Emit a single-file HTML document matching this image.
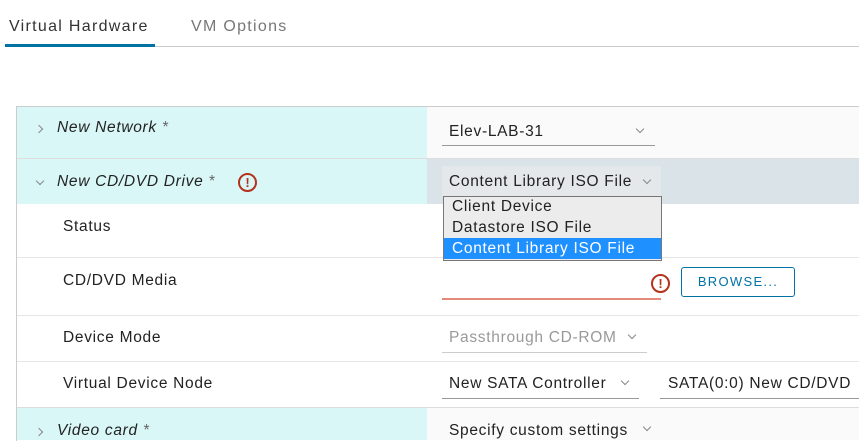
<!DOCTYPE html>
<html><head><style>
body{margin:0;width:859px;height:440px;background:#fff;font-family:"Liberation Sans",sans-serif;position:relative;overflow:hidden;color:#222}
.a{position:absolute}
.t{font-size:15.5px;white-space:nowrap;letter-spacing:0.7px}
.chr{position:absolute;width:5px;height:5px;border-right:1px solid #888;border-top:1px solid #888;transform:rotate(45deg)}
.chd{position:absolute;width:5px;height:5px;border-right:1px solid #888;border-bottom:1px solid #888;transform:rotate(45deg)}
.err{position:absolute;width:19px;height:19px;border:2px solid #b5321d;border-radius:50%;box-sizing:border-box;color:#b5321d;font-weight:bold;font-size:13px;text-align:center;line-height:15px}
.hl{position:absolute;left:17px;right:0;height:1px;background:#e6e6e6}
</style></head><body>
<div class="a t" style="left:9px;top:18px;font-size:16px;letter-spacing:1.3px;color:#333">Virtual Hardware</div>
<div class="a t" style="left:191px;top:18px;font-size:16px;letter-spacing:1.3px;color:#777">VM Options</div>
<div class="a" style="left:5px;top:46px;width:854px;height:1px;background:#ccc"></div>
<div class="a" style="left:5px;top:44px;width:150px;height:3px;background:#0072a3"></div>

<div class="a" style="left:16px;top:106px;width:843px;height:334px;border-left:1px solid #ccc;border-top:1px solid #ccc"></div>
<div class="a" style="left:17px;top:107px;width:410px;height:97px;background:#d9f7f7"></div>
<div class="a" style="left:427px;top:107px;width:432px;height:51px;background:#fafafa"></div>
<div class="a" style="left:17px;top:158px;width:842px;height:1px;background:#ddd"></div>
<div class="a" style="left:427px;top:159px;width:432px;height:45px;background:#dae3e8"></div>
<div class="a" style="left:17px;top:408px;width:410px;height:32px;background:#d9f7f7"></div>
<div class="a" style="left:427px;top:408px;width:432px;height:32px;background:#fafafa"></div>
<div class="a" style="left:17px;top:407px;width:842px;height:1px;background:#ddd"></div>
<div class="hl" style="top:257px"></div>
<div class="hl" style="top:315px"></div>
<div class="hl" style="top:361px"></div>

<div class="chr" style="left:36px;top:126px"></div>
<div class="a t" style="left:57px;top:119px;font-style:italic">New Network <span style="color:#666">*</span></div>
<div class="chd" style="left:37px;top:178px"></div>
<div class="a t" style="left:57px;top:173px;font-style:italic">New CD/DVD Drive <span style="color:#666">*</span></div>
<div class="err" style="left:238px;top:173px">!</div>
<div class="a t" style="left:63px;top:218px">Status</div>
<div class="a t" style="left:63px;top:272px">CD/DVD Media</div>
<div class="a t" style="left:63px;top:329px">Device Mode</div>
<div class="a t" style="left:63px;top:375px">Virtual Device Node</div>
<div class="chr" style="left:36px;top:429px"></div>
<div class="a t" style="left:57px;top:422px;font-style:italic">Video card <span style="color:#666">*</span></div>

<div class="a t" style="left:449px;top:123px">Elev-LAB-31</div>
<div class="chd" style="left:637px;top:126px"></div>
<div class="a" style="left:442px;top:145px;width:213px;height:1px;background:#999"></div>

<div class="a" style="left:442px;top:166px;width:219px;height:30px;background:#e4e8eb"></div>
<div class="a t" style="left:449px;top:173px">Content Library ISO File</div>
<div class="chd" style="left:644px;top:177px"></div>

<div class="a" style="left:443px;top:196px;width:217px;height:63px;background:#ececec;border:1px solid #777"></div>
<div class="a" style="left:444px;top:238px;width:217px;height:21px;background:#1e90ff"></div>
<div class="a t" style="left:452px;top:198px">Client Device</div>
<div class="a t" style="left:452px;top:219px">Datastore ISO File</div>
<div class="a t" style="left:452px;top:240px;color:#fff">Content Library ISO File</div>

<div class="err" style="left:651px;top:274px">!</div>
<div class="a" style="left:442px;top:298px;width:219px;height:2px;background:#e38a7a"></div>
<div class="a" style="left:681px;top:267px;width:112px;height:28px;border:1px solid #0072a3;border-radius:3px;color:#0072a3;font-size:13px;letter-spacing:1.3px;text-align:center;line-height:28px">BROWSE...</div>

<div class="a t" style="left:449px;top:329px;color:#999">Passthrough CD-ROM</div>
<div class="chd" style="left:629px;top:332px"></div>
<div class="a" style="left:442px;top:352px;width:205px;height:1px;background:#ccc"></div>

<div class="a t" style="left:449px;top:375px">New SATA Controller</div>
<div class="chd" style="left:622px;top:378px"></div>
<div class="a" style="left:442px;top:398px;width:197px;height:1px;background:#999"></div>
<div class="a t" style="left:668px;top:375px">SATA(0:0) New CD/DVD</div>
<div class="a" style="left:660px;top:398px;width:199px;height:1px;background:#999"></div>

<div class="a t" style="left:449px;top:422px">Specify custom settings</div>
<div class="chd" style="left:644px;top:424px"></div>
</body></html>
